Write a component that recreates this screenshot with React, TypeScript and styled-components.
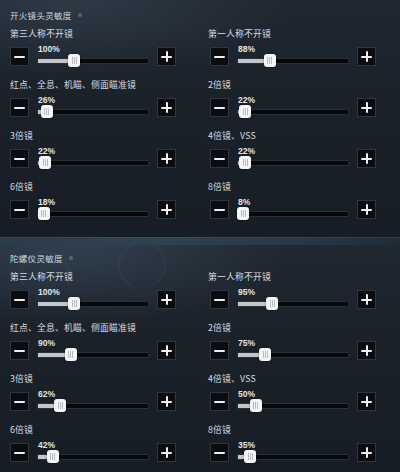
import React from 'react';
import styled, { createGlobalStyle } from 'styled-components';

const GlobalStyle = createGlobalStyle`
  html, body {
    margin: 0;
    padding: 0;
    background: #151b22;
  }
  * {
    box-sizing: border-box;
  }
`;

const MAX = 300;
const TRACK_W = 112;
const THUMB_W = 12;

const Page = styled.div`
  width: 400px;
  height: 472px;
  overflow: hidden;
  display: flex;
  flex-direction: column;
  font-family: "Noto Sans CJK SC", "Noto Sans", sans-serif;
  color: #d6dadf;
`;

const Section = styled.section<{ $top: string; $pt: number; $pb: number }>`
  position: relative;
  padding: ${p => p.$pt}px 0 ${p => p.$pb}px;
  background:
    radial-gradient(ellipse 280px 100px at 18% 0%, ${p => p.$top}, transparent 80%),
    linear-gradient(180deg, #1f2730 0%, #1a2129 45%, #171d24 100%);
`;

const Rings = styled.div`
  position: absolute;
  left: 0;
  top: 0;
  width: 400px;
  height: 40px;
  overflow: hidden;
  pointer-events: none;
  &::before,
  &::after {
    content: '';
    position: absolute;
    border-radius: 50%;
    border: 2px solid rgba(120, 150, 170, 0.07);
  }
  &::before {
    left: 20px;
    top: 6px;
    width: 46px;
    height: 46px;
  }
  &::after {
    left: 118px;
    top: -4px;
    width: 44px;
    height: 44px;
  }
`;

const Divider = styled.div`
  height: 12px;
  background: linear-gradient(90deg, #2b3c4b 0%, #2f4252 40%, #283848 75%, #202c38 100%);
  box-shadow: inset 0 1px 0 rgba(140, 170, 190, 0.12);
`;

const Header = styled.div`
  position: relative;
  display: flex;
  align-items: center;
  gap: 6px;
  height: 14px;
  padding-left: 10px;
  margin-bottom: 5px;
  font-size: 8.5px;
  letter-spacing: 0.3px;
  color: #d3d8dd;
`;

const Dot = styled.span`
  width: 4px;
  height: 4px;
  border-radius: 50%;
  background: rgba(170, 185, 200, 0.35);
`;

const Grid = styled.div`
  display: grid;
  grid-template-columns: 200px 200px;
  row-gap: 12px;
`;

const Cell = styled.div<{ $right?: boolean }>`
  display: flex;
  flex-direction: column;
  gap: 6px;
  padding-left: ${p => (p.$right ? 8 : 10)}px;
`;

const Label = styled.div`
  height: 14px;
  line-height: 14px;
  font-size: 8.8px;
  letter-spacing: 0.2px;
  color: #d8dce1;
  white-space: nowrap;
`;

const Controls = styled.div<{ $right?: boolean }>`
  display: flex;
  align-items: center;
  gap: 8px;
  height: 19px;
  padding-left: ${p => (p.$right ? 2 : 0)}px;
`;

const StepButton = styled.div`
  position: relative;
  width: 19px;
  height: 19px;
  flex: none;
  background: #0a0c0f;
  border: 1px solid #2e363f;
  display: flex;
  align-items: center;
  justify-content: center;
`;

const Bar = styled.span<{ $vertical?: boolean }>`
  position: absolute;
  background: #eceef0;
  border-radius: 1px;
  width: ${p => (p.$vertical ? 2 : 11)}px;
  height: ${p => (p.$vertical ? 11 : 2)}px;
`;

const Slider = styled.div`
  position: relative;
  width: ${TRACK_W}px;
  height: 19px;
  flex: none;
`;

const Percent = styled.div`
  position: absolute;
  left: 1px;
  top: -2px;
  font-family: "Liberation Sans", Arial, sans-serif;
  font-size: 8.5px;
  font-weight: bold;
  line-height: 9px;
  color: #e2e5e8;
`;

const Track = styled.div`
  position: absolute;
  left: 0;
  right: 0;
  top: 11px;
  height: 6px;
  background: #06080a;
  border: 1px solid #2a3038;
  border-radius: 1px;
`;

const Fill = styled.div`
  position: absolute;
  left: 0;
  top: 0;
  bottom: 0;
  background: #c3c7cb;
`;

const Thumb = styled.div`
  position: absolute;
  top: 7px;
  width: ${THUMB_W}px;
  height: 13px;
  border-radius: 3px;
  background: #f4f5f6;
  box-shadow: 0 0 2px rgba(0, 0, 0, 0.5);
  display: flex;
  align-items: center;
  justify-content: center;
  gap: 1px;
  span {
    width: 1px;
    height: 7px;
    background: #b8bcc0;
  }
`;

type Item = { label: string; value: number };

const fire: Item[] = [
  { label: '第三人称不开镜', value: 100 },
  { label: '第一人称不开镜', value: 88 },
  { label: '红点、全息、机瞄、侧面瞄准镜', value: 26 },
  { label: '2倍镜', value: 22 },
  { label: '3倍镜', value: 22 },
  { label: '4倍镜、VSS', value: 22 },
  { label: '6倍镜', value: 18 },
  { label: '8倍镜', value: 8 },
];

const gyro: Item[] = [
  { label: '第三人称不开镜', value: 100 },
  { label: '第一人称不开镜', value: 95 },
  { label: '红点、全息、机瞄、侧面瞄准镜', value: 90 },
  { label: '2倍镜', value: 75 },
  { label: '3倍镜', value: 62 },
  { label: '4倍镜、VSS', value: 50 },
  { label: '6倍镜', value: 42 },
  { label: '8倍镜', value: 35 },
];

function SensSlider({ value }: { value: number }) {
  const center = (value / MAX) * TRACK_W;
  const thumbLeft = Math.min(Math.max(center - THUMB_W / 2, 0), TRACK_W - THUMB_W);
  return (
    <Slider>
      <Percent>{value}%</Percent>
      <Track>
        <Fill style={{ width: thumbLeft + THUMB_W / 2 }} />
      </Track>
      <Thumb style={{ left: thumbLeft }}>
        <span />
        <span />
        <span />
      </Thumb>
    </Slider>
  );
}

function Setting({ item, right }: { item: Item; right: boolean }) {
  return (
    <Cell $right={right}>
      <Label>{item.label}</Label>
      <Controls $right={right}>
        <StepButton>
          <Bar />
        </StepButton>
        <SensSlider value={item.value} />
        <StepButton>
          <Bar />
          <Bar $vertical />
        </StepButton>
      </Controls>
    </Cell>
  );
}

function Group({ title, items, pt, pb, top, rings }: {
  title: string; items: Item[]; pt: number; pb: number; top: string; rings?: boolean;
}) {
  return (
    <Section $pt={pt} $pb={pb} $top={top}>
      {rings && <Rings />}
      <Header>
        {title}
        <Dot />
      </Header>
      <Grid>
        {items.map((item, i) => (
          <Setting key={item.label + i} item={item} right={i % 2 === 1} />
        ))}
      </Grid>
    </Section>
  );
}

export default function App() {
  return (
    <Page>
      <GlobalStyle />
      <Group title="开火镜头灵敏度" items={fire} pt={8} pb={18} top="rgba(52, 64, 78, 0.75)" />
      <Divider />
      <Group title="陀螺仪灵敏度" items={gyro} pt={6} pb={10} top="rgba(54, 70, 86, 0.8)" rings />
    </Page>
  );
}
